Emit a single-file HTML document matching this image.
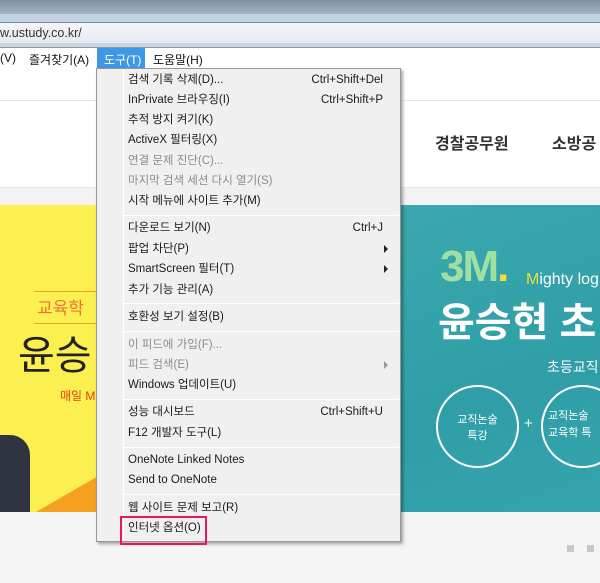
<!DOCTYPE html>
<html><head><meta charset="utf-8"><style>
*{margin:0;padding:0;box-sizing:border-box}
body{width:600px;height:583px;overflow:hidden;position:relative;background:#f5f5f5;font-family:"Liberation Sans","Noto Sans CJK KR",sans-serif}
.a{position:absolute}
.mi{position:absolute;left:128px;font-size:11.5px;color:#1a1a1a;white-space:nowrap;line-height:14px}
.dis{color:#8c8c8c}
.sc{position:absolute;right:18px;font-size:11.5px;color:#1a1a1a;line-height:14px}
.sep{position:absolute;left:124px;right:2px;height:1px;background:#dcdcdc;border-bottom:1px solid #fff}
.ar{position:absolute;left:288px;width:0;height:0;border-left:4px solid #222;border-top:4px solid transparent;border-bottom:4px solid transparent}
</style></head><body>
<div class="a" style="left:0;top:0;width:600px;height:16px;background:linear-gradient(#7d8fa2,#a9bccd)"></div>
<div class="a" style="left:0;top:14px;width:600px;height:9px;background:#c3d3e3"></div>
<div class="a" style="left:0;top:22px;width:600px;height:21px;background:linear-gradient(#f4f6f8,#e6ebf0);border-top:1px solid #7a8898"></div>
<div class="a" style="left:0;top:26px;font-size:12.5px;color:#333">w.ustudy.co.kr/</div>
<div class="a" style="left:0;top:43px;width:600px;height:5px;background:#c8d6e4;border-bottom:1px solid #8d99a6"></div>
<div class="a" style="left:0;top:48px;width:600px;height:20px;background:#fff"></div>
<div class="a" style="left:0;top:51px;font-size:12px;color:#111">(V)</div>
<div class="a" style="left:29px;top:51px;font-size:12px;color:#111">즐겨찾기(A)</div>
<div class="a" style="left:97px;top:48px;width:48px;height:20px;background:#3d98e6"></div>
<div class="a" style="left:104px;top:51px;font-size:12px;color:#fff">도구(T)</div>
<div class="a" style="left:153px;top:51px;font-size:12px;color:#111">도움말(H)</div>
<!-- page -->
<div class="a" style="left:0;top:68px;width:600px;height:120px;background:#fff"></div>
<div class="a" style="left:0;top:100px;width:600px;height:1px;background:#e6e6e6"></div>
<div class="a" style="left:0;top:187px;width:600px;height:18px;background:#f3f3f3;border-top:1px solid #e4e4e4"></div>
<div class="a" style="left:435px;top:130px;font-size:16px;font-weight:bold;color:#333">경찰공무원</div>
<div class="a" style="left:552px;top:130px;font-size:16px;font-weight:bold;color:#333">소방공</div>
<div class="a" style="left:0;top:205px;width:100px;height:307px;background:#fbf050;overflow:hidden">
 <div class="a" style="left:34px;top:86px;width:70px;height:33px;border-top:1px solid #f5a020;border-bottom:1px solid #f5a020"></div>
 <div class="a" style="left:37px;top:89px;font-size:17px;color:#f0703a">교육학</div>
 <div class="a" style="left:18px;top:118px;font-size:40px;color:#222">윤승</div>
 <div class="a" style="left:60px;top:182px;font-size:12px;color:#e84010">매일 M</div>
 <div class="a" style="left:0;top:230px;width:30px;height:77px;background:#2f3440;border-radius:0 20px 0 0"></div>
 <div class="a" style="left:36px;top:270px;width:0;height:0;border-right:64px solid #f5a020;border-top:37px solid transparent"></div>
</div>
<div class="a" style="left:400px;top:205px;width:200px;height:307px;background:linear-gradient(160deg,#3aa8ae,#2f9ea6 60%,#35a5ad)"></div>
<div class="a" style="left:440px;top:242px;font-size:44px;font-weight:bold;color:#9fe0a0;letter-spacing:-2px">3M<span style="color:#f0e030">.</span></div>
<div class="a" style="left:526px;top:271px;font-size:16px;color:#fff"><span style="color:#e8e040">M</span>ighty log</div>
<div class="a" style="left:438px;top:290px;font-size:40px;font-weight:bold;color:#fff">윤승현 초</div>
<div class="a" style="left:547px;top:357px;font-size:14px;color:#fff">초등교직</div>
<div class="a" style="left:436px;top:385px;width:83px;height:83px;border:2px solid #fff;border-radius:50%"></div>
<div class="a" style="left:436px;top:412px;width:83px;text-align:center;font-size:11px;color:#fff;line-height:16px">교직논술<br>특강</div>
<div class="a" style="left:524px;top:415px;font-size:15px;color:#fff">+</div>
<div class="a" style="left:541px;top:385px;width:83px;height:83px;border:2px solid #fff;border-radius:50%"></div>
<div class="a" style="left:548px;top:408px;font-size:11px;color:#fff;line-height:17px">교직논술<br>교육학 특</div>
<div class="a" style="left:567px;top:545px;width:7px;height:7px;background:#c8c8c8"></div>
<div class="a" style="left:587px;top:545px;width:7px;height:7px;background:#c8c8c8"></div>
<!-- menu -->
<div class="a" style="left:96px;top:68px;width:305px;height:474px;background:#f0f0f0;border:1px solid #979797;box-shadow:2px 2px 3px rgba(0,0,0,.35)">
 <div class="a" style="left:26px;top:0;width:1px;height:472px;background:#e2e3e3;border-right:1px solid #fff"></div>
</div>
<div class="a" style="left:96px;top:68px;width:305px;height:474px">
 <div class="mi" style="left:32px;top:5px">검색 기록 삭제(D)...</div><div class="sc" style="top:5px">Ctrl+Shift+Del</div>
 <div class="mi" style="left:32px;top:25px">InPrivate 브라우징(I)</div><div class="sc" style="top:25px">Ctrl+Shift+P</div>
 <div class="mi" style="left:32px;top:45px">추적 방지 켜기(K)</div>
 <div class="mi" style="left:32px;top:65px">ActiveX 필터링(X)</div>
 <div class="mi dis" style="left:32px;top:86px">연결 문제 진단(C)...</div>
 <div class="mi dis" style="left:32px;top:106px">마지막 검색 세션 다시 열기(S)</div>
 <div class="mi" style="left:32px;top:126px">시작 메뉴에 사이트 추가(M)</div>
 <div class="sep" style="left:28px;top:147px"></div>
 <div class="mi" style="left:32px;top:153px">다운로드 보기(N)</div><div class="sc" style="top:153px">Ctrl+J</div>
 <div class="mi" style="left:32px;top:174px">팝업 차단(P)</div><div class="ar" style="top:171px;top:177px"></div>
 <div class="mi" style="left:32px;top:194px">SmartScreen 필터(T)</div><div class="ar" style="top:197px"></div>
 <div class="mi" style="left:32px;top:215px">추가 기능 관리(A)</div>
 <div class="sep" style="left:28px;top:235px"></div>
 <div class="mi" style="left:32px;top:242px">호환성 보기 설정(B)</div>
 <div class="sep" style="left:28px;top:263px"></div>
 <div class="mi dis" style="left:32px;top:270px">이 피드에 가입(F)...</div>
 <div class="mi dis" style="left:32px;top:290px">피드 검색(E)</div><div class="ar" style="top:293px;border-left-color:#999"></div>
 <div class="mi" style="left:32px;top:310px">Windows 업데이트(U)</div>
 <div class="sep" style="left:28px;top:331px"></div>
 <div class="mi" style="left:32px;top:337px">성능 대시보드</div><div class="sc" style="top:337px">Ctrl+Shift+U</div>
 <div class="mi" style="left:32px;top:358px">F12 개발자 도구(L)</div>
 <div class="sep" style="left:28px;top:379px"></div>
 <div class="mi" style="left:32px;top:385px">OneNote Linked Notes</div>
 <div class="mi" style="left:32px;top:405px">Send to OneNote</div>
 <div class="sep" style="left:28px;top:426px"></div>
 <div class="mi" style="left:32px;top:433px">웹 사이트 문제 보고(R)</div>
 <div class="mi" style="left:32px;top:453px">인터넷 옵션(O)</div>
</div>
<div class="a" style="left:120px;top:516px;width:87px;height:29px;border:2px solid #e8195a"></div>
</body></html>
